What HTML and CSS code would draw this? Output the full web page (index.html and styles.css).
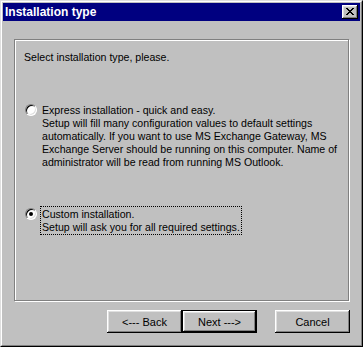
FILE: index.html
```html
<!DOCTYPE html>
<html lang="en">

<head>
    <meta charset="UTF-8">
    <title>Installation type</title>
    <link rel="stylesheet" href="styles.css">
</head>

<body>
    <div class="window">
        <div class="frame">
            <div class="titlebar">
                <span class="title">Installation type</span>
                <button class="close">
                    <svg width="8" height="7" viewBox="0 0 8 7" shape-rendering="crispEdges">
                        <path d="M0 0h2v1H0z M6 0h2v1H6z M1 1h2v1H1z M5 1h2v1H5z M2 2h4v1H2z M3 3h2v1H3z M2 4h4v1H2z M1 5h2v1H1z M5 5h2v1H5z M0 6h2v1H0z M6 6h2v1H6z" fill="#000" />
                    </svg>
                </button>
            </div>
            <div class="content">
                <div class="groupbox">
                    <p class="prompt">Select installation type, please.</p>
                    <div class="option express">
                        <span class="radio"></span>
                        <div class="label">
                            Express installation - quick and easy.<br>
                            Setup will fill many configuration values to default settings<br>
                            automatically. If you want to use MS Exchange Gateway, MS<br>
                            Exchange Server should be running on this computer. Name of<br>
                            administrator will be read from running MS Outlook.
                        </div>
                    </div>
                    <div class="option custom">
                        <span class="radio checked"></span>
                        <div class="label focused">
                            Custom installation.<br>
                            Setup will ask you for all required settings.
                        </div>
                    </div>
                </div>
                <div class="buttons">
                    <button class="btn">&lt;--- Back</button>
                    <button class="btn default">Next ---&gt;</button>
                    <button class="btn cancel">Cancel</button>
                </div>
            </div>
        </div>
    </div>
</body>

</html>
```

FILE: styles.css
```css
* {
    box-sizing: border-box;
}

body {
    margin: 0;
    background: #c0c0c0;
    font-family: 'Liberation Sans', Arial, sans-serif;
    font-size: 10.6px;
    color: #000;
}

.window {
    width: 363px;
    height: 347px;
    border: 1px solid;
    border-color: #dfdfdf #000 #000 #dfdfdf;
    background: #c0c0c0;
}

.frame {
    height: 100%;
    border: 1px solid;
    border-color: #fff #808080 #808080 #fff;
    padding: 1px;
    display: flex;
    flex-direction: column;
}

.titlebar {
    height: 18px;
    background: #000080;
    display: flex;
    align-items: center;
    justify-content: space-between;
    padding: 0 2px;
}

.title {
    color: #fff;
    font-weight: bold;
    font-size: 12px;
    line-height: 18px;
}

.close {
    width: 16px;
    height: 14px;
    padding: 0;
    border: none;
    background: #c0c0c0;
    box-shadow: inset -1px -1px #000, inset 1px 1px #fff, inset -2px -2px #808080, inset 2px 2px #dfdfdf;
    display: flex;
    align-items: center;
    justify-content: center;
}

.close svg {
    display: block;
    margin: 0 1px 1px 0;
}

.content {
    flex: 1;
    display: flex;
    flex-direction: column;
    padding: 18px 11px 11px;
}

.groupbox {
    flex: 1;
    border: 1px solid #808080;
    box-shadow: inset 1px 1px #fff, 1px 1px #fff;
    padding: 11px 9px 0;
}

.prompt {
    margin: 0;
    line-height: 13px;
}

.option {
    display: flex;
    align-items: flex-start;
}

.express {
    margin-top: 38px;
}

.custom {
    margin-top: 35px;
}

.radio {
    width: 12px;
    height: 12px;
    margin: 2px 3px 0 1px;
    border-radius: 50%;
    background: #fff;
    border: 1px solid;
    border-color: #808080 #fff #fff #808080;
    box-shadow: inset 1px 1px #000, inset -1px -1px #dfdfdf;
    display: flex;
    align-items: center;
    justify-content: center;
    flex: none;
}

.radio.checked::after {
    content: '';
    width: 4px;
    height: 4px;
    border-radius: 50%;
    background: #000;
}

.label {
    line-height: 13px;
    white-space: nowrap;
    padding: 1px;
    border: 1px dotted transparent;
}

.label.focused {
    line-height: 12.5px;
    border-color: #000;
}

.buttons {
    display: flex;
    justify-content: flex-end;
    margin-top: 9px;
}

.btn {
    width: 75px;
    height: 23px;
    padding: 0;
    border: none;
    background: #c0c0c0;
    font-family: 'Liberation Sans', Arial, sans-serif;
    font-size: 11px;
    color: #000;
    box-shadow: inset -1px -1px #000, inset 1px 1px #fff, inset -2px -2px #808080, inset 2px 2px #dfdfdf;
}

.btn.default {
    border: 1px solid #000;
}

.btn.cancel {
    margin-left: 18px;
    margin-right: -1px;
}
```
